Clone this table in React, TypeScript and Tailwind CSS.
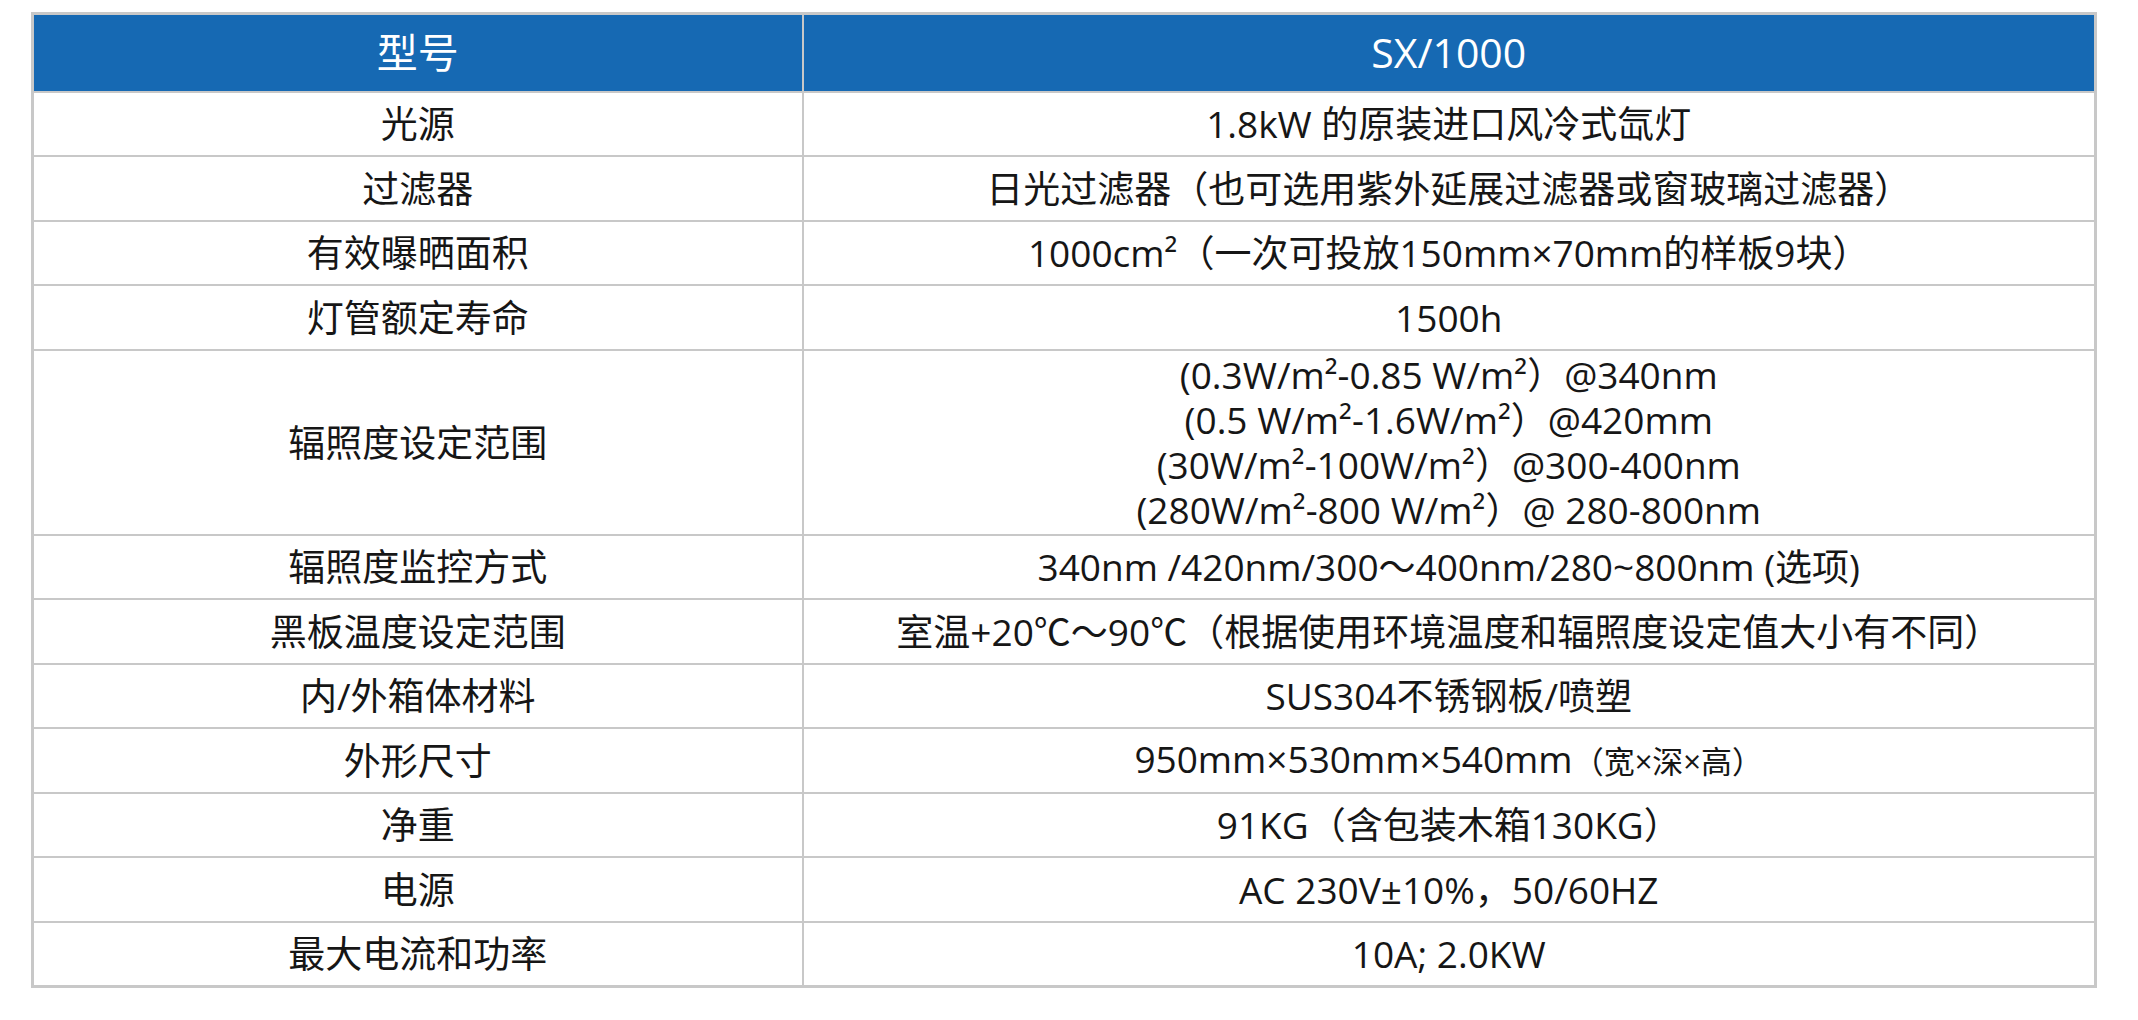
import React from 'react'

const rows: { label: string; value: React.ReactNode; tall?: boolean }[] = [
  { label: '光源', value: '1.8kW 的原装进口风冷式氙灯' },
  { label: '过滤器', value: '日光过滤器（也可选用紫外延展过滤器或窗玻璃过滤器）' },
  { label: '有效曝晒面积', value: '1000cm²（一次可投放150mm×70mm的样板9块）' },
  { label: '灯管额定寿命', value: '1500h' },
  {
    label: '辐照度设定范围',
    tall: true,
    value: (
      <>
        <div>(0.3W/m²-0.85 W/m²）@340nm</div>
        <div>(0.5 W/m²-1.6W/m²）@420mm</div>
        <div>(30W/m²-100W/m²）@300-400nm</div>
        <div>(280W/m²-800 W/m²）@ 280-800nm</div>
      </>
    ),
  },
  { label: '辐照度监控方式', value: '340nm /420nm/300～400nm/280~800nm (选项)' },
  { label: '黑板温度设定范围', value: '室温+20℃～90℃（根据使用环境温度和辐照度设定值大小有不同）' },
  { label: '内/外箱体材料', value: 'SUS304不锈钢板/喷塑' },
  {
    label: '外形尺寸',
    value: (
      <>
        950mm×530mm×540mm<span className="text-[31px]">（宽×深×高）</span>
      </>
    ),
  },
  { label: '净重', value: '91KG（含包装木箱130KG）' },
  { label: '电源', value: 'AC 230V±10%，50/60HZ' },
  { label: '最大电流和功率', value: '10A; 2.0KW' },
]

export default function App() {
  return (
    <div
      className="min-h-screen bg-white pl-[31px] pt-[12px]"
      style={{ fontFamily: '"Open Sans", "Noto Sans CJK SC", sans-serif' }}
    >
      <table className="w-[2066px] table-fixed border-collapse border-[3px] border-[#c8c8c8] text-[37px] text-[#161616]">
        <colgroup>
          <col className="w-[770px]" />
          <col />
        </colgroup>
        <thead>
          <tr className="h-[78px] bg-[#1669b3] text-[41px] text-white">
            <th className="border-2 border-[#c8c8c8] p-0 text-center font-normal">型号</th>
            <th className="border-2 border-[#c8c8c8] p-0 text-center font-normal">SX/1000</th>
          </tr>
        </thead>
        <tbody>
          {rows.map((row) => (
            <tr key={row.label} className={row.tall ? 'h-[185px]' : 'h-[64.5px]'}>
              <td className="border-2 border-[#c8c8c8] p-0 text-center leading-[45px]">{row.label}</td>
              <td className="border-2 border-[#c8c8c8] p-0 text-center leading-[45px]">{row.value}</td>
            </tr>
          ))}
        </tbody>
      </table>
    </div>
  )
}
